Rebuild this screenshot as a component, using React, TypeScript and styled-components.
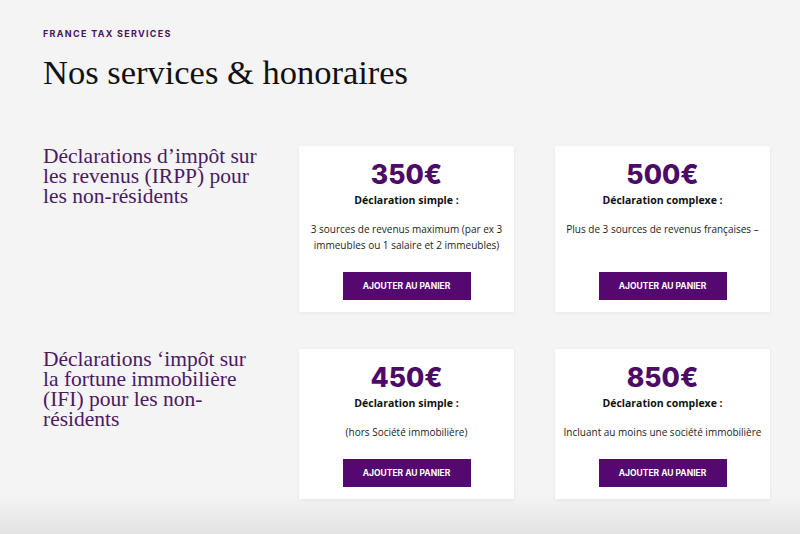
import React from "react";
import styled, { createGlobalStyle } from "styled-components";

interface IOffer {
    price: string,
    label: string,
    text: React.ReactNode
}

interface ISection {
    title: React.ReactNode,
    offers: IOffer[]
}

const sections: ISection[] = [
    {
        title: <>Déclarations d’impôt sur<br />les revenus (IRPP) pour<br />les non-résidents</>,
        offers: [
            { price: '350€', label: 'Déclaration simple :', text: '3 sources de revenus maximum (par ex 3 immeubles ou 1 salaire et 2 immeubles)' },
            { price: '500€', label: 'Déclaration complexe :', text: 'Plus de 3 sources de revenus françaises –' },
        ]
    },
    {
        title: <>Déclarations ‘impôt sur<br />la fortune immobilière<br />(IFI) pour les non-<br />résidents</>,
        offers: [
            { price: '450€', label: 'Déclaration simple :', text: '(hors Société immobilière)' },
            { price: '850€', label: 'Déclaration complexe :', text: 'Incluant au moins une société immobilière' },
        ]
    }
]

const App: React.FC = () => {
    return (
        <>
            <GlobalStyle />
            <Page>
                <Eyebrow>France Tax Services</Eyebrow>
                <Title>Nos services &amp; honoraires</Title>
                <Grid>
                    {sections.map((s, i) => (
                        <React.Fragment key={i}>
                            <SectionTitle>{s.title}</SectionTitle>
                            {s.offers.map((o) => (
                                <Card key={o.price}>
                                    <Price>{o.price}</Price>
                                    <Label>{o.label}</Label>
                                    <Text>{o.text}</Text>
                                    <CartButton>Ajouter au panier</CartButton>
                                </Card>
                            ))}
                        </React.Fragment>
                    ))}
                </Grid>
            </Page>
        </>
    )
}

const GlobalStyle = createGlobalStyle`
    body {
        margin: 0;
        font-family: "Open Sans", "Liberation Sans", sans-serif;
    }
`;

const Page = styled.div`
    height: 534px;
    overflow: hidden;
    box-sizing: border-box;
    padding: 28px 0 0 43px;
    background: linear-gradient(to bottom, #f4f4f4 0, #f4f4f4 494px, #e3e3e3 534px);
`;

const Eyebrow = styled.div`
    font-family: Inter, "Liberation Sans", sans-serif;
    font-size: 9px;
    line-height: 12px;
    font-weight: 700;
    letter-spacing: 1.3px;
    text-transform: uppercase;
    color: #4b1162;
`;

const Title = styled.h1`
    margin: 12px 0 0;
    font-family: "Liberation Serif", serif;
    font-weight: 400;
    font-size: 34.5px;
    line-height: 40px;
    color: #111;
`;

const Grid = styled.div`
    margin-top: 54px;
    display: grid;
    grid-template-columns: 215px 215px 215px;
    column-gap: 41px;
    row-gap: 37px;
    align-items: stretch;
`;

const SectionTitle = styled.h2`
    margin: 0;
    font-family: "Liberation Serif", serif;
    font-weight: 400;
    font-size: 21.5px;
    line-height: 20px;
    color: #4b1a63;
    white-space: nowrap;
`;

const Card = styled.div`
    display: flex;
    flex-direction: column;
    align-items: center;
    padding: 12px 4px;
    background: #fff;
    box-shadow: 0 1px 4px rgba(0, 0, 0, 0.06);
    text-align: center;
`;

const Price = styled.div`
    font-family: Inter, "Liberation Sans", sans-serif;
    font-size: 26.5px;
    line-height: 32px;
    font-weight: 800;
    color: #4d0b67;
`;

const Label = styled.div`
    margin-top: 2px;
    font-size: 10.5px;
    line-height: 16px;
    font-weight: 700;
    color: #111;
`;

const Text = styled.p`
    margin: 13px 0 19px;
    font-size: 10px;
    line-height: 16px;
    color: #1c1c1c;
`;

const CartButton = styled.button`
    margin-top: auto;
    width: 128px;
    height: 28px;
    border: none;
    padding: 0;
    background: #55086f;
    color: #fff;
    font-family: Inter, "Liberation Sans", sans-serif;
    font-size: 8.5px;
    font-weight: 700;
    letter-spacing: 0;
    text-transform: uppercase;
    cursor: pointer;
`;

export default App
